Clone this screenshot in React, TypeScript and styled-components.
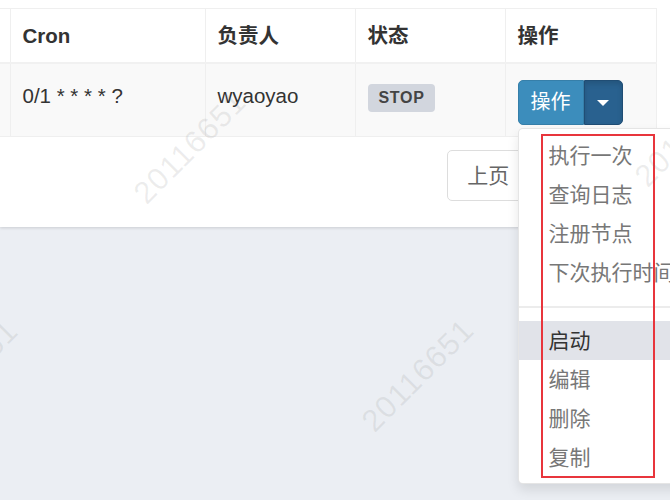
import styled, { createGlobalStyle } from "styled-components";

const GlobalStyle = createGlobalStyle`
  html, body {
    margin: 0;
    padding: 0;
    background: #ebeef3;
    overflow: hidden;
  }
  body {
    font-family: "Liberation Sans", "Noto Sans CJK SC", sans-serif;
    color: #333;
  }
`;

const Page = styled.div`
  position: relative;
  width: 670px;
  height: 500px;
  overflow: hidden;
  background: #ebeef3;
`;

const Card = styled.div`
  height: 227px;
  box-sizing: border-box;
  padding-top: 8px;
  background: #fff;
  box-shadow: 0 1px 3px rgba(0, 0, 0, 0.14);
`;

const Table = styled.table`
  width: 656px;
  table-layout: fixed;
  border-collapse: collapse;
  font-size: 20.5px;
  line-height: 29px;
`;

const Th = styled.th<{ $stub?: boolean }>`
  padding: 12px 12px;
  text-align: left;
  font-weight: bold;
  color: #333;
  border: 1px solid #efefef;
  border-bottom: 2px solid #f1f1f1;
  border-left: ${(p) => (p.$stub ? "none" : "1px solid #efefef")};
`;

const BodyRow = styled.tr`
  background: #f9f9f9;
`;

const Td = styled.td<{ $stub?: boolean }>`
  padding: 17px 12px 11px;
  vertical-align: top;
  color: #333;
  border: 1px solid #efefef;
  border-left: ${(p) => (p.$stub ? "none" : "1px solid #efefef")};
`;

const Label = styled.span`
  display: inline-block;
  margin-top: 1px;
  height: 28px;
  padding: 0 10px 0 11px;
  border-radius: 4px;
  background: #d2d6de;
  color: #444;
  font-size: 16px;
  font-weight: bold;
  letter-spacing: 0.7px;
  line-height: 28px;
`;

const BtnGroup = styled.div`
  position: relative;
  display: inline-flex;
  margin-top: -1px;
`;

const Btn = styled.button`
  height: 45px;
  padding: 0 12px;
  border: 1px solid #367fa9;
  border-radius: 5px 0 0 5px;
  background: #3c8dbc;
  color: #fff;
  font: inherit;
  font-size: 20px;
`;

const Toggle = styled.button`
  width: 39px;
  height: 45px;
  display: flex;
  align-items: center;
  justify-content: center;
  border: 1px solid #204d74;
  border-radius: 0 5px 5px 0;
  background: #29618f;
  box-shadow: inset 0 3px 5px rgba(0, 0, 0, 0.125);
`;

const Caret = styled.span`
  width: 0;
  height: 0;
  border-top: 6px solid #fff;
  border-left: 6px solid transparent;
  border-right: 6px solid transparent;
`;

const Menu = styled.ul`
  position: absolute;
  top: calc(100% + 3px);
  left: 0;
  z-index: 10;
  min-width: 224px;
  margin: 0;
  padding: 7px 0 6px;
  list-style: none;
  background: #fff;
  border: 1px solid rgba(0, 0, 0, 0.1);
  border-radius: 5px;
  box-shadow: 0 6px 12px rgba(0, 0, 0, 0.1);
`;

const MenuItem = styled.li<{ $active?: boolean }>`
  padding: 5px 30px;
  font-size: 21px;
  line-height: 29px;
  white-space: nowrap;
  color: ${(p) => (p.$active ? "#333" : "#777")};
  background: ${(p) => (p.$active ? "#e1e3e9" : "transparent")};
`;

const Divider = styled.li`
  height: 2px;
  margin: 14px 0 13px;
  background: #ececec;
`;

const Annotation = styled.div`
  position: absolute;
  top: 5px;
  left: 22px;
  width: 114px;
  height: 344px;
  box-sizing: border-box;
  border: 2px solid #e8353c;
  pointer-events: none;
`;

const Pager = styled.div`
  display: flex;
  justify-content: flex-end;
  width: 661px;
  margin-top: 13px;
`;

const PageBtn = styled.span`
  height: 51px;
  box-sizing: border-box;
  padding: 0 19px;
  margin-left: -1px;
  border: 1px solid #ddd;
  background: #fff;
  color: #666;
  font-size: 21px;
  line-height: 49px;
  &:first-child {
    margin-left: 0;
    border-radius: 5px 0 0 5px;
  }
  &:last-child {
    border-radius: 0 5px 5px 0;
  }
`;

const Watermarks = styled.div`
  position: absolute;
  inset: 0;
  z-index: 50;
  pointer-events: none;
`;

const Mark = styled.span`
  position: absolute;
  font-family: "Liberation Sans", sans-serif;
  font-size: 31px;
  line-height: 31px;
  letter-spacing: 1px;
  color: rgba(110, 110, 110, 0.12);
  transform-origin: 0 100%;
  transform: rotate(-45deg);
  white-space: nowrap;
`;

// start point = bottom-left of the text, before rotation
const marks = [
  { x: 150, y: 209 },
  { x: 378, y: 437 },
  { x: -78, y: 438 },
  { x: 651, y: 192 },
];

const upperItems = ["执行一次", "查询日志", "注册节点", "下次执行时间"];
const lowerItems = ["启动", "编辑", "删除", "复制"];

const App = () => {
  return (
    <Page>
      <GlobalStyle />
      <Card>
        <Table>
          <colgroup>
            <col style={{ width: 10 }} />
            <col style={{ width: 195 }} />
            <col style={{ width: 150 }} />
            <col style={{ width: 150 }} />
            <col style={{ width: 151 }} />
          </colgroup>
          <thead>
            <tr>
              <Th $stub />
              <Th>Cron</Th>
              <Th>负责人</Th>
              <Th>状态</Th>
              <Th>操作</Th>
            </tr>
          </thead>
          <tbody>
            <BodyRow>
              <Td $stub />
              <Td>0/1 * * * * ?</Td>
              <Td>wyaoyao</Td>
              <Td>
                <Label>STOP</Label>
              </Td>
              <Td>
                <BtnGroup>
                  <Btn>操作</Btn>
                  <Toggle>
                    <Caret />
                  </Toggle>
                  <Menu>
                    {upperItems.map((t) => (
                      <MenuItem key={t}>{t}</MenuItem>
                    ))}
                    <Divider />
                    {lowerItems.map((t, i) => (
                      <MenuItem key={t} $active={i === 0}>
                        {t}
                      </MenuItem>
                    ))}
                    <Annotation />
                  </Menu>
                </BtnGroup>
              </Td>
            </BodyRow>
          </tbody>
        </Table>
        <Pager>
          <PageBtn>上页</PageBtn>
          <PageBtn>1</PageBtn>
          <PageBtn>下页</PageBtn>
        </Pager>
      </Card>
      <Watermarks>
        {marks.map((m, i) => (
          <Mark key={i} style={{ left: m.x, top: m.y - 31 }}>
            20116651
          </Mark>
        ))}
      </Watermarks>
    </Page>
  );
};

export default App;
